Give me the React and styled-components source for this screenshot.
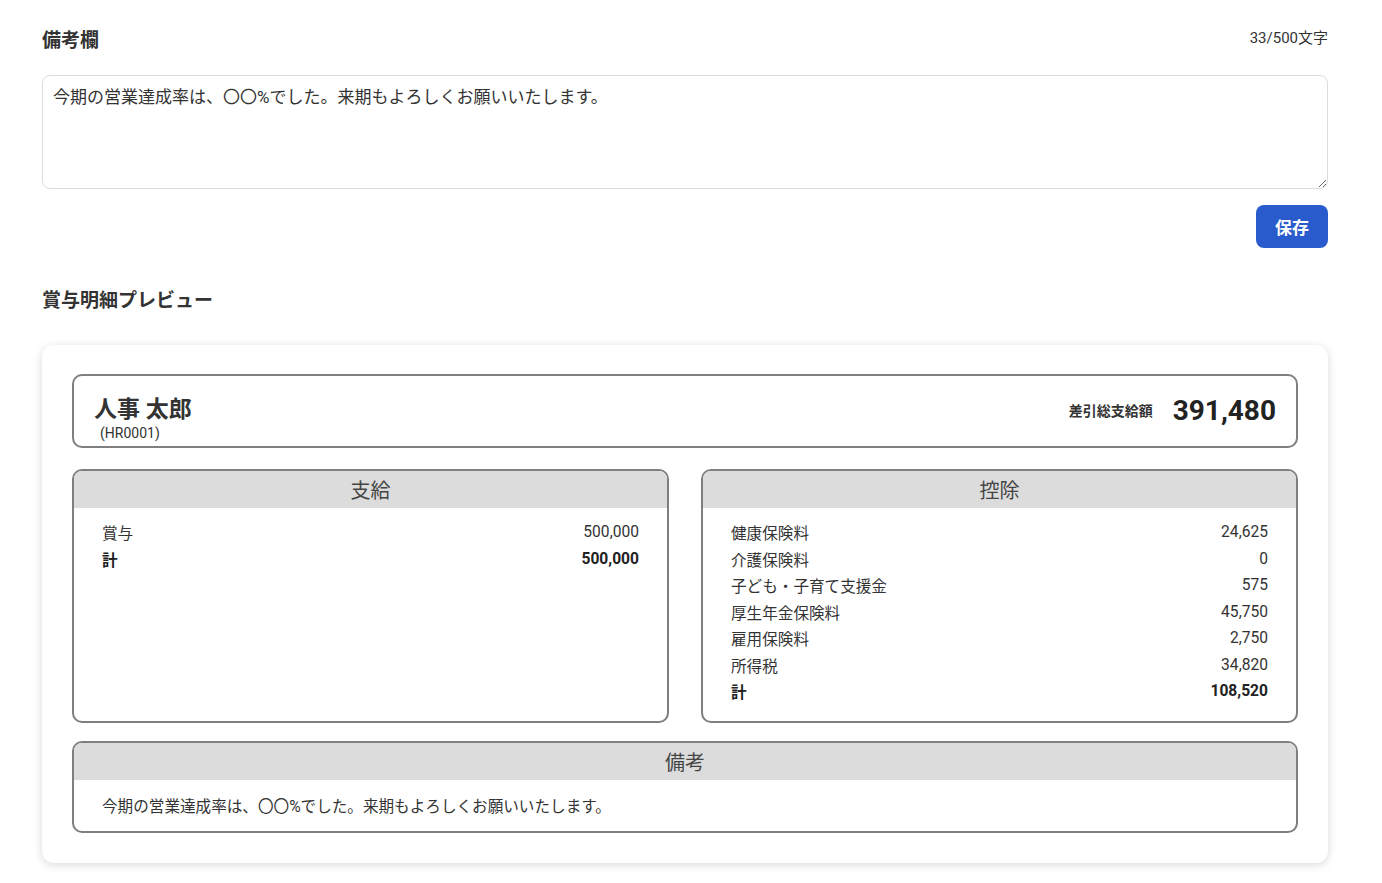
import React from 'react';
import styled, { createGlobalStyle } from 'styled-components';

const GlobalStyle = createGlobalStyle`
  html, body {
    margin: 0;
    padding: 0;
    background: #fff;
  }
  body {
    font-family: Roboto, "Noto Sans CJK JP", sans-serif;
    color: #333;
  }
`;

const Page = styled.div`
  padding: 26px 54px 20px 42px;
`;

const SectionHead = styled.div`
  display: flex;
  justify-content: space-between;
  align-items: flex-start;
  margin-bottom: 19px;
`;

const Title = styled.h2`
  margin: 0;
  font-size: 19px;
  font-weight: 700;
  line-height: 30px;
  color: #333;
`;

const Counter = styled.span`
  margin-top: -1px;
  font-size: 15px;
  line-height: 26px;
  color: #333;
`;

const Memo = styled.textarea`
  display: block;
  box-sizing: border-box;
  width: 100%;
  height: 114px;
  padding: 10px;
  border: 1px solid #ddd;
  border-radius: 8px;
  font-family: inherit;
  font-size: 17px;
  line-height: 22px;
  color: #333;
  resize: vertical;
  outline: none;
`;

const Actions = styled.div`
  display: flex;
  justify-content: flex-end;
  margin-top: 16px;
  margin-bottom: 38px;
`;

const SaveButton = styled.button`
  width: 72px;
  height: 43px;
  border: none;
  border-radius: 8px;
  background: #2a5bcd;
  color: #fff;
  font-family: inherit;
  font-size: 17px;
  font-weight: 700;
  cursor: pointer;
`;

const PreviewTitle = styled(Title)`
  margin-bottom: 29px;
`;

const Card = styled.div`
  background: #fff;
  border-radius: 12px;
  box-shadow: 0 2px 10px rgba(0, 0, 0, 0.15);
  padding: 29px 30px 30px;
  display: flex;
  flex-direction: column;
`;

const Box = styled.div`
  border: 2px solid #7f7f7f;
  border-radius: 10px;
  overflow: hidden;
  background: #fff;
`;

const HeaderBox = styled(Box)`
  display: flex;
  justify-content: space-between;
  align-items: flex-start;
  padding: 19px 20px 5px;
  margin-bottom: 21px;
`;

const Person = styled.div`
  display: flex;
  flex-direction: column;
`;

const Name = styled.div`
  font-size: 23px;
  font-weight: 700;
  line-height: 30px;
  color: #333;
`;

const Code = styled.div`
  font-size: 14px;
  line-height: 16px;
  margin-left: 6px;
  color: #333;
`;

const Net = styled.div`
  display: flex;
  align-items: center;
  gap: 20px;
  height: 30px;
`;

const NetLabel = styled.span`
  font-size: 14px;
  font-weight: 700;
`;

const NetValue = styled.span`
  font-size: 28px;
  font-weight: 700;
  color: #222;
`;

const Columns = styled.div`
  display: grid;
  grid-template-columns: 1fr 1fr;
  gap: 32px;
  margin-bottom: 18px;
`;

const BoxTitle = styled.div`
  background: #dcdcdc;
  height: 37px;
  display: flex;
  align-items: center;
  justify-content: center;
  font-size: 20px;
  color: #444;
`;

const List = styled.div`
  padding: 11px 28px 16px 28px;
`;

const Row = styled.div`
  display: flex;
  justify-content: space-between;
  align-items: center;
  height: 26.5px;
  font-size: 15.6px;
  font-weight: ${p => (p.$total ? 700 : 400)};
  color: ${p => (p.$total ? '#222' : '#333')};
`;

const NoteText = styled.div`
  padding: 17px 28px 14px;
  font-size: 15.6px;
  line-height: 20px;
  color: #333;
`;

const memo = '今期の営業達成率は、〇〇%でした。来期もよろしくお願いいたします。';

const payments = [
  ['賞与', '500,000'],
];

const deductions = [
  ['健康保険料', '24,625'],
  ['介護保険料', '0'],
  ['子ども・子育て支援金', '575'],
  ['厚生年金保険料', '45,750'],
  ['雇用保険料', '2,750'],
  ['所得税', '34,820'],
];

const Section = ({ title, rows, total }) => (
  <Box>
    <BoxTitle>{title}</BoxTitle>
    <List>
      {rows.map(([label, value]) => (
        <Row key={label}>
          <span>{label}</span>
          <span>{value}</span>
        </Row>
      ))}
      <Row $total>
        <span>計</span>
        <span>{total}</span>
      </Row>
    </List>
  </Box>
);

export default function App() {
  return (
    <>
      <GlobalStyle />
      <Page>
        <SectionHead>
          <Title>備考欄</Title>
          <Counter>33/500文字</Counter>
        </SectionHead>
        <Memo defaultValue={memo} />
        <Actions>
          <SaveButton>保存</SaveButton>
        </Actions>

        <PreviewTitle>賞与明細プレビュー</PreviewTitle>
        <Card>
          <HeaderBox>
            <Person>
              <Name>人事 太郎</Name>
              <Code>(HR0001)</Code>
            </Person>
            <Net>
              <NetLabel>差引総支給額</NetLabel>
              <NetValue>391,480</NetValue>
            </Net>
          </HeaderBox>
          <Columns>
            <Section title="支給" rows={payments} total="500,000" />
            <Section title="控除" rows={deductions} total="108,520" />
          </Columns>
          <Box>
            <BoxTitle>備考</BoxTitle>
            <NoteText>{memo}</NoteText>
          </Box>
        </Card>
      </Page>
    </>
  );
}
